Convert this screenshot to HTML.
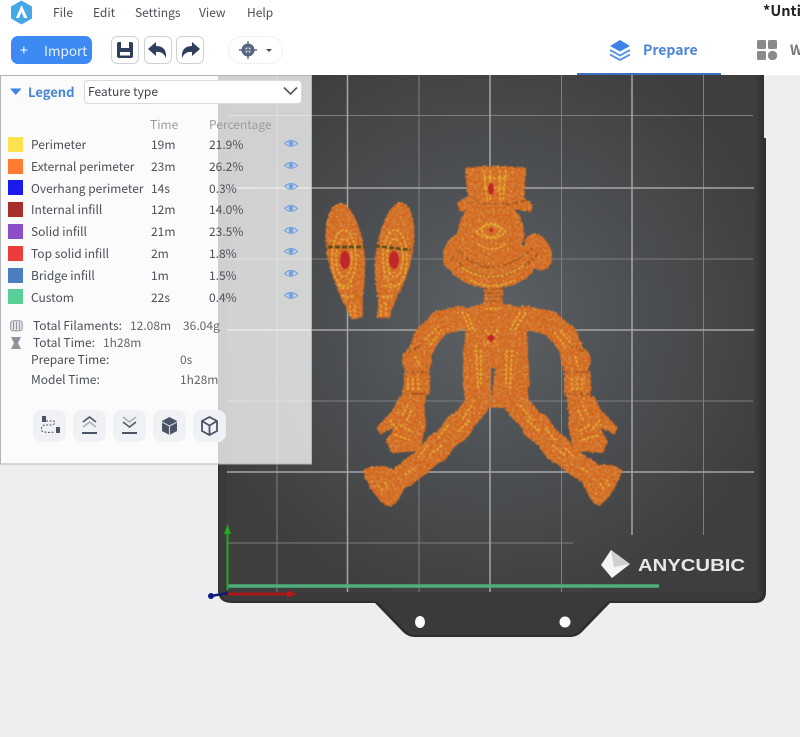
<!DOCTYPE html>
<html><head><meta charset="utf-8">
<style>
*{box-sizing:border-box;margin:0;padding:0}
html,body{width:800px;height:737px;overflow:hidden;background:#eceef0}
body{position:relative;font-family:"Noto Sans CJK SC","Liberation Sans",sans-serif;font-size:12px;color:#4b4f57}
.t{position:absolute;white-space:nowrap;line-height:16px;transform:translateY(-8px)}
.hdr{position:absolute;left:0;top:0;width:800px;height:75px;background:#fff}
.btn{position:absolute;top:36px;width:28px;height:28px;border:1px solid #cfd0d3;border-radius:6px;background:#fff}
.sw{position:absolute;left:8px;width:15px;height:15px}
.tb{position:absolute;top:410px;width:33px;height:32px;border-radius:8px;background:#eff1f5}
</style></head><body>
<svg style="position:absolute;left:0;top:0" width="800" height="737" viewBox="0 0 800 737">
<defs>
<radialGradient id="bg" gradientUnits="userSpaceOnUse" cx="490" cy="320" r="300">
<stop offset="0" stop-color="#5d6165"/><stop offset=".5" stop-color="#4c4f52"/><stop offset="1" stop-color="#3e3e3e"/></radialGradient>
<linearGradient id="edge" x1="0" x2="1" y1="0" y2="0"><stop offset="0" stop-color="#3e3e3e"/><stop offset="1" stop-color="#2f2f2f"/></linearGradient>
<filter id="bump" filterUnits="userSpaceOnUse" x="310" y="150" width="330" height="370">
<feTurbulence type="fractalNoise" baseFrequency=".42" numOctaves="2" seed="7" result="n"/>
<feDisplacementMap in="SourceGraphic" in2="n" scale="3.500" xChannelSelector="R" yChannelSelector="G" result="d"/>
<feColorMatrix in="n" type="matrix" values="0 0 0 0 .62  0 0 0 0 .26  0 0 0 0 .05  3 0 0 0 -1.300" result="c"/>
<feComposite in="c" in2="d" operator="in" result="s"/>
<feColorMatrix in="n" type="matrix" values="0 0 0 0 .93  0 0 0 0 .5  0 0 0 0 .16  0 3 0 0 -1.850" result="c2"/>
<feComposite in="c2" in2="d" operator="in" result="s2"/>
<feMerge result="m"><feMergeNode in="d"/><feMergeNode in="s"/><feMergeNode in="s2"/></feMerge>
<feGaussianBlur in="m" stdDeviation=".45"/>
</filter>
<filter id="soft" filterUnits="userSpaceOnUse" x="310" y="150" width="330" height="370"><feGaussianBlur stdDeviation=".4"/></filter>
</defs>
<!-- bed -->
<path d="M218 75H764V138H766V592Q766 603 755 603H610L582 632Q577 637 570 637H415Q408 637 403 632L375 603H232Q218 603 218 590Z" fill="#2e2e2e"/>
<path d="M219 75H763V590Q763 600 753 601H608L580 630Q576 635 570 635H415Q409 635 405 630L377 601H232Q219 600 219 590Z" fill="#3a3a3a"/>
<rect x="227" y="75" width="528" height="517" fill="url(#bg)"/>
<rect x="755" y="75" width="9" height="517" fill="url(#edge)"/>
<ellipse cx="420" cy="622" rx="5" ry="6" fill="#fff"/><ellipse cx="565" cy="622" rx="5.500" ry="5.500" fill="#fff"/>
<!-- grid -->
<g stroke="#7d7f81" stroke-width="1">
<path d="M277 75V592M419 75V592M561.500 75V592M703.500 75V535"/>
<path d="M227 115.500H753M227 259H753M227 401H753M227 543H573"/>
</g>
<g stroke="#a4a6a8" stroke-width="1.500">
<path d="M347.500 75V592M490 75V592M632 75V535"/>
<path d="M227 188H754M227 330H754M227 472H754"/>
</g>
<!-- logo -->
<path d="M611 550L630 564L612 578L601 565Z" fill="#f4f4f4"/>
<path d="M611 550L630 564L614 567Z" fill="#cfcfcf"/>
<text x="638" y="571" font-family="Liberation Sans,sans-serif" font-weight="700" font-size="17.500" fill="#e8e8e8" textLength="107" lengthAdjust="spacingAndGlyphs">ANYCUBIC</text>
<!-- axes -->
<path d="M228 586H659" stroke="#4faf7b" stroke-width="3.500"/>
<path d="M227.500 530V590" stroke="#1faa1f" stroke-width="2"/>
<path d="M227.500 524L231 534H224Z" fill="#1faa1f"/>
<path d="M228 594H290" stroke="#a81818" stroke-width="3"/><path d="M297 594L287 590V598Z" fill="#b81818"/>
<path d="M211 596L228 593" stroke="#101a70" stroke-width="2.500"/><circle cx="211" cy="596" r="3" fill="#101a80"/>
<!-- figure -->
<g filter="url(#bump)">
<g fill="#d4631c">
<path d="M340 203C330 205 324 222 326 245C328 272 340 295 352 320L363 317C361 300 366 285 365 262C364 232 352 203 340 203Z"/>
<path d="M400 202C388 206 377 232 375 262C373 285 382 296 376 318L390 318C392 300 408 285 413 250C417 225 412 202 400 202Z"/>
<path d="M465 168Q495 164 526 168L524 200H468Z"/>
<path d="M457 203Q470 193 495 195Q522 193 533 205L531 212Q495 205 460 212Z"/>
<circle cx="491" cy="233" r="33"/>
<ellipse cx="492" cy="263" rx="43" ry="25"/>
<ellipse cx="456" cy="252" rx="12" ry="19" transform="rotate(20 456 252)"/>
<ellipse cx="538" cy="252" rx="13" ry="19" transform="rotate(-22 538 252)"/>
<rect x="484" y="285" width="19" height="22"/>
<path d="M458 310L482 304H505L523 308L527 325L528 355L530 385L515 408H490L495 368H491L490 408H466L463 385L463 355L466 325Z"/>
<g fill="none" stroke="#d4631c" stroke-linecap="round" stroke-linejoin="round" stroke-width="24">
<path d="M460 318L440 323L427 337L417 358L416 383L412 408"/>
<path d="M525 318L550 323L565 337L575 358L577 383L580 408"/>
</g>
<ellipse cx="427" cy="337" rx="16" ry="13" transform="rotate(-45 427 337)"/>
<ellipse cx="417" cy="360" rx="15" ry="14"/>
<rect x="404" y="372" width="26" height="22" rx="4"/>
<ellipse cx="565" cy="337" rx="16" ry="13" transform="rotate(45 565 337)"/>
<ellipse cx="576" cy="360" rx="15" ry="14"/>
<rect x="564" y="372" width="27" height="22" rx="4"/>
<path d="M400 396L424 403L426 425L420 451L392 453L386 441L394 428L380 434L376 428L393 410Z"/>
<path d="M594 396L570 403L568 425L574 451L603 453L608 441L600 428L614 434L618 428L601 410Z"/>
<g fill="none" stroke="#d4631c" stroke-linejoin="round" stroke-linecap="round" stroke-width="24">
<path d="M477 365L477 405L457 428L437 448L420 463L405 475"/>
<path d="M514 365L517 405L537 427L557 448L573 462L590 473"/>
</g>
<ellipse cx="457" cy="428" rx="19" ry="14" transform="rotate(-45 457 428)"/>
<ellipse cx="437" cy="448" rx="19" ry="14" transform="rotate(-45 437 448)"/>
<ellipse cx="537" cy="427" rx="19" ry="14" transform="rotate(45 537 427)"/>
<ellipse cx="557" cy="448" rx="19" ry="14" transform="rotate(45 557 448)"/>
<path d="M363 470Q380 462 395 470L408 482L398 500Q392 510 385 505Q368 490 363 470Z"/>
<path d="M622 470Q610 461 593 466L580 478L590 498Q597 510 603 503Q618 488 622 470Z"/>
</g>
<g fill="none" stroke="#a84c12" stroke-width="2">
<path d="M451 255Q492 300 540 252M456 250Q492 285 532 248"/>
<path d="M469 201Q495 208 525 201"/>
<path d="M484 289H503M484 293H503M484 297H503M484 301H503"/>
<path d="M404 372H430M404 394H430M564 372H591M564 394H591M422 345L408 352M570 345L585 352"/>
</g>
</g>
<!-- details -->
<g filter="url(#soft)">
<g fill="none" stroke="#e8b832" stroke-width="1.500" stroke-dasharray="3 1.500">
<ellipse cx="344" cy="258" rx="12" ry="28"/><ellipse cx="344" cy="258" rx="8" ry="19"/>
<ellipse cx="395" cy="258" rx="12" ry="28"/><ellipse cx="395" cy="258" rx="8" ry="19"/>
<path d="M338 285Q346 292 352 285M342 295Q348 300 354 295M350 305V316M355 305V316M385 285Q392 290 400 283M382 296Q388 300 394 294M381 305V316M386 303V316"/>
<path d="M484 170L487 200M490 170V200M500 170V200M506 170L503 200M484 178H507M484 188H507"/>
<path d="M476 232Q491 218 506 232Q491 245 476 232Z"/><ellipse cx="491" cy="230" rx="9" ry="7"/>
<path d="M462 268Q492 287 525 265M470 280Q492 292 515 280M478 244Q492 254 506 244"/>
<path d="M462 312L470 330M467 314L475 332M526 312L515 330M520 312L510 330M485 330L498 345M498 330L485 345M476 345L478 390M481 350L481 385M512 350L510 390M507 350L506 385M485 309H500"/>
<path d="M425 340L438 326M430 345L442 330M415 356L420 366M408 378V390M413 378V390M418 378V390M408 405L402 415M412 410L406 422M390 420L398 430M395 435L410 440M400 425L412 432"/>
<path d="M560 330L572 345M554 332L566 348M575 356L578 366M572 378V390M577 378V390M582 378V390M583 405L588 415M578 410L584 422M600 420L592 430M598 435L582 440M590 425L578 432"/>
<path d="M472 405L462 420M470 420L458 432M448 425L438 438M442 445L430 455M428 445L418 458M414 468L405 475M378 485L383 492M385 482L388 490"/>
<path d="M520 405L532 420M527 420L540 432M545 428L555 440M552 445L565 455M565 448L575 458M582 468L590 474M600 483L604 490M606 480L610 487"/>
</g>
<g fill="#c2262a"><ellipse cx="345" cy="260" rx="5" ry="9"/><ellipse cx="394" cy="260" rx="5" ry="9"/><ellipse cx="491" cy="189" rx="3" ry="6"/><circle cx="491" cy="338" r="3.500"/><circle cx="491" cy="230" r="2"/></g>
<path d="M328 247L366 247M375 246L411 250" stroke="#5c4a1e" stroke-width="3" stroke-dasharray="5 2" fill="none"/>
</g>
<!-- panel -->
<rect x=".5" y="75.500" width="311" height="388.500" fill="rgba(255,255,255,.76)" stroke="#b4b5b8"/>
</svg>
<div class="hdr"></div>
<div style="position:absolute;left:577px;top:73px;width:144px;height:2px;background:#3c6fc0"></div>
<svg style="position:absolute;left:10px;top:0" width="23" height="25"><path d="M11.500 0.500L22 6.500V18.500L11.500 24.500L1 18.500V6.500Z" fill="#45a8e6"/><path d="M11.500 5L6 18H9L11.500 12L14 18H17.500Z" fill="#fff"/></svg>
<span class="t" style="left:53px;top:13px">File</span>
<span class="t" style="left:93px;top:13px">Edit</span>
<span class="t" style="left:135px;top:13px">Settings</span>
<span class="t" style="left:199px;top:13px">View</span>
<span class="t" style="left:247px;top:13px">Help</span>
<span class="t" style="left:763px;top:11px;font-weight:700;font-size:14.500px;color:#222">*Untitled</span>
<div style="position:absolute;left:11px;top:36px;width:81px;height:28px;border-radius:7px;background:#3d8bf2"></div>
<span class="t" style="left:20px;top:50px;color:#fff;font-size:14px">+</span>
<span class="t" style="left:44px;top:50px;color:#e6f0ff;font-size:13.500px">Import</span>
<div class="btn" style="left:111px"><svg width="26" height="26"><path d="M7 5H19Q21 5 21 7V19Q21 21 19 21H7Q5 21 5 19V7Q5 5 7 5Z" fill="#2f3e5c"/><rect x="9" y="5" width="8" height="6" fill="#fff"/><rect x="8" y="15" width="10" height="3.500" fill="#fff"/></svg></div>
<div class="btn" style="left:144px"><svg width="26" height="26"><path d="M11 5L3 12L11 19V15Q18 14 21 21Q22 9 11 9Z" fill="#2f3e5c"/></svg></div>
<div class="btn" style="left:176px"><svg width="26" height="26"><path d="M15 5L23 12L15 19V15Q8 14 5 21Q4 9 15 9Z" fill="#2f3e5c"/></svg></div>
<div style="position:absolute;left:228px;top:36px;width:55px;height:28px;border:1px solid #f0f0f2;border-radius:14px;background:#fff"></div>
<svg style="position:absolute;left:238px;top:40px" width="40" height="20"><circle cx="10" cy="10" r="6.500" fill="#56657f"/><circle cx="10" cy="10" r="3" fill="#cfd8e6"/><path d="M10 1V19M1 10H19" stroke="#56657f" stroke-width="1.400"/><path d="M28 9H34L31 12Z" fill="#4b4f57"/></svg>
<svg style="position:absolute;left:608px;top:39px" width="24" height="22"><path d="M12 1L22 7L12 12.500L2 7Z" fill="#3d82e6"/><path d="M2 11L12 16.500L22 11M2 15.500L12 21L22 15.500" fill="none" stroke="#5d97e6" stroke-width="2"/></svg>
<span class="t" style="left:643px;top:50px;font-weight:700;font-size:14px;color:#4a84d8">Prepare</span>
<svg style="position:absolute;left:757px;top:40px" width="21" height="20"><rect x="0" y="0" width="9" height="9" rx="1.500" fill="#8a8a8a"/><rect x="11" y="0" width="9" height="9" rx="1.500" fill="#8a8a8a"/><rect x="0" y="11" width="9" height="9" rx="1.500" fill="#8a8a8a"/><circle cx="15.500" cy="15.500" r="4.700" fill="#8a8a8a"/></svg>
<span class="t" style="left:790px;top:50px;font-weight:700;font-size:14px;color:#777">W</span>

<svg style="position:absolute;left:10px;top:88px" width="12" height="8"><path d="M0 .5H11.500L5.700 7Z" fill="#3d82e6"/></svg>
<span class="t" style="left:28px;top:92px;font-weight:700;font-size:13px;color:#4a84d8">Legend</span>
<div style="position:absolute;left:84px;top:80px;width:218px;height:24px;background:#fff;border:1px solid #d8d9dc;border-radius:4px"></div>
<span class="t" style="left:88px;top:92px;color:#3e424a">Feature type</span>
<svg style="position:absolute;left:283px;top:86px" width="15" height="10"><path d="M1 1.500L7.500 8L14 1.500" fill="none" stroke="#555" stroke-width="1.600"/></svg>
<span class="t" style="left:150px;top:125px;color:#9a9ca0">Time</span>
<span class="t" style="left:209px;top:125px;color:#9a9ca0">Percentage</span>

<div class="sw" style="top:137px;background:#ffe14d"></div><span class="t" style="left:31px;top:145px">Perimeter</span><span class="t" style="left:151px;top:145px">19m</span><span class="t" style="left:209px;top:145px">21.9%</span>
<div class="sw" style="top:159px;background:#ff7b33"></div><span class="t" style="left:31px;top:167px">External perimeter</span><span class="t" style="left:151px;top:167px">23m</span><span class="t" style="left:209px;top:167px">26.2%</span>
<div class="sw" style="top:180px;background:#1a1aee"></div><span class="t" style="left:31px;top:189px">Overhang perimeter</span><span class="t" style="left:151px;top:189px">14s</span><span class="t" style="left:209px;top:189px">0.3%</span>
<div class="sw" style="top:202px;background:#a92f2a"></div><span class="t" style="left:31px;top:210px">Internal infill</span><span class="t" style="left:151px;top:210px">12m</span><span class="t" style="left:209px;top:210px">14.0%</span>
<div class="sw" style="top:224px;background:#8d4fc7"></div><span class="t" style="left:31px;top:232px">Solid infill</span><span class="t" style="left:151px;top:232px">21m</span><span class="t" style="left:209px;top:232px">23.5%</span>
<div class="sw" style="top:246px;background:#ee3b3b"></div><span class="t" style="left:31px;top:254px">Top solid infill</span><span class="t" style="left:151px;top:254px">2m</span><span class="t" style="left:209px;top:254px">1.8%</span>
<div class="sw" style="top:268px;background:#4c7fbf"></div><span class="t" style="left:31px;top:276px">Bridge infill</span><span class="t" style="left:151px;top:276px">1m</span><span class="t" style="left:209px;top:276px">1.5%</span>
<div class="sw" style="top:289px;background:#58cf97"></div><span class="t" style="left:31px;top:298px">Custom</span><span class="t" style="left:151px;top:298px">22s</span><span class="t" style="left:209px;top:298px">0.4%</span>

<svg style="position:absolute;left:284px;top:137px" width="15" height="165" fill="none" stroke="#6fa1e2" stroke-width="1.100">
<g><path d="M.7 6.500Q7 .5 13.500 6.500Q7 12 .7 6.500Z"/><circle cx="7" cy="6.300" r="1.800" fill="#6fa1e2"/></g>
<g transform="translate(0 22)"><path d="M.7 6.500Q7 .5 13.500 6.500Q7 12 .7 6.500Z"/><circle cx="7" cy="6.300" r="1.800" fill="#6fa1e2"/></g>
<g transform="translate(0 43)"><path d="M.7 6.500Q7 .5 13.500 6.500Q7 12 .7 6.500Z"/><circle cx="7" cy="6.300" r="1.800" fill="#6fa1e2"/></g>
<g transform="translate(0 65)"><path d="M.7 6.500Q7 .5 13.500 6.500Q7 12 .7 6.500Z"/><circle cx="7" cy="6.300" r="1.800" fill="#6fa1e2"/></g>
<g transform="translate(0 87)"><path d="M.7 6.500Q7 .5 13.500 6.500Q7 12 .7 6.500Z"/><circle cx="7" cy="6.300" r="1.800" fill="#6fa1e2"/></g>
<g transform="translate(0 108)"><path d="M.7 6.500Q7 .5 13.500 6.500Q7 12 .7 6.500Z"/><circle cx="7" cy="6.300" r="1.800" fill="#6fa1e2"/></g>
<g transform="translate(0 130)"><path d="M.7 6.500Q7 .5 13.500 6.500Q7 12 .7 6.500Z"/><circle cx="7" cy="6.300" r="1.800" fill="#6fa1e2"/></g>
<g transform="translate(0 152)"><path d="M.7 6.500Q7 .5 13.500 6.500Q7 12 .7 6.500Z"/><circle cx="7" cy="6.300" r="1.800" fill="#6fa1e2"/></g>
</svg>

<svg style="position:absolute;left:10px;top:320px" width="14" height="30"><rect x=".7" y=".7" width="11.500" height="10" rx="2.500" fill="#e4e6ea" stroke="#8e939c"/><path d="M3.500 2V9.500M6.500 2V9.500M9.500 2V9.500" stroke="#8e939c"/><path d="M1 18H11L8 24L11 30H1L4 24Z" fill="#8e939c" transform="translate(0 -1)"/></svg>
<span class="t" style="left:33px;top:326px">Total Filaments:</span><span class="t" style="left:130px;top:326px;color:#666">12.08m</span><span class="t" style="left:183px;top:326px;color:#666">36.04g</span>
<span class="t" style="left:33px;top:343px">Total Time:</span><span class="t" style="left:103px;top:343px;color:#666">1h28m</span>
<span class="t" style="left:31px;top:360px">Prepare Time:</span><span class="t" style="left:180px;top:360px;color:#666">0s</span>
<span class="t" style="left:31px;top:380px">Model Time:</span><span class="t" style="left:180px;top:380px;color:#666">1h28m</span>

<div class="tb" style="left:33px"><svg width="33" height="32"><rect x="9" y="6" width="4" height="6" fill="#4b5366"/><rect x="23" y="17" width="4" height="6" fill="#4b5366"/><path d="M13 11H21Q23 14 19 15H11Q7 18 9 21Q12 23 22 22" fill="none" stroke="#4b5366" stroke-dasharray="2 1.500"/></svg></div>
<div class="tb" style="left:73px"><svg width="33" height="32"><path d="M10 12L16.500 7L23 12" fill="none" stroke="#4b5366" stroke-width="1.500"/><path d="M10 17L16.500 12L23 17" fill="none" stroke="#a9aeb8" stroke-width="1.500"/><path d="M9 23H24" stroke="#4b5366" stroke-width="2"/></svg></div>
<div class="tb" style="left:113px"><svg width="33" height="32"><path d="M10 7L16.500 12L23 7" fill="none" stroke="#a9aeb8" stroke-width="1.500"/><path d="M10 12L16.500 17L23 12" fill="none" stroke="#4b5366" stroke-width="1.500"/><path d="M9 23H24" stroke="#4b5366" stroke-width="2"/></svg></div>
<div class="tb" style="left:153px"><svg width="33" height="32"><path d="M16.500 7L24 11V21L16.500 25L9 21V11Z" fill="#4b5366"/><path d="M9 12L16.500 16L24 12M16.500 16V25" fill="none" stroke="#cfd3da" stroke-width="1.200"/></svg></div>
<div class="tb" style="left:193px"><svg width="33" height="32"><path d="M16.500 7L24 11V21L16.500 25L9 21V11ZM9 11L16.500 15.500L24 11M16.500 15.500V25" fill="none" stroke="#4b5366" stroke-width="1.800"/></svg></div>
</body></html>
